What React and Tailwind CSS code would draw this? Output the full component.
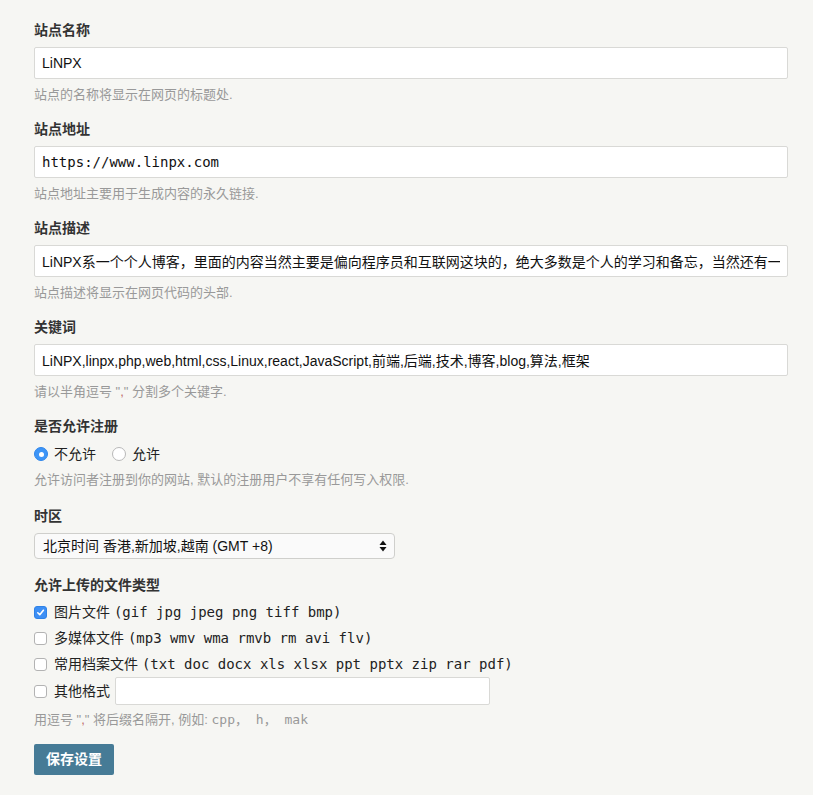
import React, { useState } from 'react';

const SANS = 'font-["Liberation_Sans","Noto_Sans_CJK_SC",sans-serif]';
const MONO = 'font-["DejaVu_Sans_Mono","Noto_Sans_CJK_SC",monospace]';

function Label({ children }) {
  return <div className="text-[14px] leading-5 font-bold text-[#333]">{children}</div>;
}

function Help({ children, className = '' }) {
  return <div className={`text-[13px] leading-5 text-[#999] ${className}`}>{children}</div>;
}

function TextField({ value, mono }) {
  return (
    <input
      type="text"
      defaultValue={value}
      className={`mt-[7px] block w-full h-8 px-[7px] bg-white border border-[#d9d9d6] rounded-[2px] text-[14px] text-[#111] outline-none ${mono ? MONO : SANS}`}
    />
  );
}

function Radio({ checked, label, onClick }) {
  return (
    <label className="flex items-center gap-[6px] cursor-pointer" onClick={onClick}>
      {checked ? (
        <span className="w-[14px] h-[14px] rounded-full bg-[#3d95f7] border border-[#2f86ea] flex items-center justify-center">
          <span className="w-[5px] h-[5px] rounded-full bg-white" />
        </span>
      ) : (
        <span className="w-[14px] h-[14px] rounded-full bg-white border border-[#b8b8b8]" />
      )}
      <span className="text-[14px] text-[#222]">{label}</span>
    </label>
  );
}

function Check({ checked, onClick }) {
  return checked ? (
    <span onClick={onClick} className="w-[13px] h-[13px] shrink-0 rounded-[3px] bg-[#3d8ff5] border border-[#2f82e6] flex items-center justify-center cursor-pointer">
      <svg width="9" height="9" viewBox="0 0 10 10">
        <path d="M2 5.3 L4.2 7.5 L8.2 2.5" fill="none" stroke="#fff" strokeWidth="1.8" strokeLinecap="round" strokeLinejoin="round" />
      </svg>
    </span>
  ) : (
    <span onClick={onClick} className="w-[13px] h-[13px] shrink-0 rounded-[3px] bg-white border border-[#b3b3b3] cursor-pointer" />
  );
}

const FILE_TYPES = [
  { name: '图片文件', ext: '(gif jpg jpeg png tiff bmp)' },
  { name: '多媒体文件', ext: '(mp3 wmv wma rmvb rm avi flv)' },
  { name: '常用档案文件', ext: '(txt doc docx xls xlsx ppt pptx zip rar pdf)' },
];

export default function App() {
  const [allowRegister, setAllowRegister] = useState(false);
  const [types, setTypes] = useState([true, false, false, false]);

  const toggleType = (i) => {
    setTypes((prev) => prev.map((v, idx) => (idx === i ? !v : v)));
  };

  return (
    <div className={`min-h-[795px] bg-[#f6f6f3] ${SANS}`}>
      <div className="pl-[34px] pr-[25px] pt-5 w-[813px]">
        {/* 站点名称 */}
        <div className="mb-[14px]">
          <Label>站点名称</Label>
          <TextField value="LiNPX" />
          <Help className="mt-1.5">站点的名称将显示在网页的标题处.</Help>
        </div>

        <div className="mb-[14px]">
          <Label>站点地址</Label>
          <TextField value="https://www.linpx.com" mono />
          <Help className="mt-1.5">站点地址主要用于生成内容的永久链接.</Help>
        </div>

        <div className="mb-[14px]">
          <Label>站点描述</Label>
          <TextField value="LiNPX系一个个人博客，里面的内容当然主要是偏向程序员和互联网这块的，绝大多数是个人的学习和备忘，当然还有一些生活上的记录。" />
          <Help className="mt-1.5">站点描述将显示在网页代码的头部.</Help>
        </div>

        <div className="mb-[14px]">
          <Label>关键词</Label>
          <TextField value="LiNPX,linpx,php,web,html,css,Linux,react,JavaScript,前端,后端,技术,博客,blog,算法,框架" />
          <Help className="mt-1.5">
            请以半角逗号 "<span className="text-[#c06a6a]">,</span>" 分割多个关键字.
          </Help>
        </div>

        {/* 注册 */}
        <div className="mb-4">
          <Label>是否允许注册</Label>
          <div className="mt-2 h-5 flex items-center gap-4">
            <Radio checked={!allowRegister} label="不允许" onClick={() => setAllowRegister(false)} />
            <Radio checked={allowRegister} label="允许" onClick={() => setAllowRegister(true)} />
          </div>
          <Help className="mt-1.5">允许访问者注册到你的网站, 默认的注册用户不享有任何写入权限.</Help>
        </div>

        {/* 时区 */}
        <div className="mb-4">
          <Label>时区</Label>
          <div className="mt-[7px] relative w-[361px] h-[26px]">
            <select
              defaultValue="8"
              className={`appearance-none w-full h-full pl-2 pr-6 bg-[#fafafa] border border-[#cfcfcc] rounded-[4px] text-[14px] text-[#111] outline-none ${SANS}`}
            >
              <option value="8">北京时间 香港,新加坡,越南 (GMT +8)</option>
            </select>
            <svg className="absolute right-[8px] top-[7px] pointer-events-none" width="8" height="12" viewBox="0 0 8 12">
              <path d="M4 0.5 L7.5 5 L0.5 5 Z" fill="#111" />
              <path d="M4 11.5 L7.5 7 L0.5 7 Z" fill="#111" />
            </svg>
          </div>
        </div>

        {/* 文件类型 */}
        <div>
          <Label>允许上传的文件类型</Label>
          <div className="mt-1 flex flex-col">
            {FILE_TYPES.map((t, i) => (
              <div key={t.name} className="h-[26px] flex items-center gap-[7px]">
                <Check checked={types[i]} onClick={() => toggleType(i)} />
                <span className="text-[14px] text-[#222] whitespace-nowrap">
                  {t.name} <span className={`${MONO} text-[14px]`}>{t.ext}</span>
                </span>
              </div>
            ))}
            <div className="h-[28px] flex items-center gap-[7px]">
              <Check checked={types[3]} onClick={() => toggleType(3)} />
              <span className="text-[14px] text-[#222] whitespace-nowrap">其他格式</span>
              <input
                type="text"
                className="ml-[-2px] w-[375px] h-[28px] bg-white border border-[#d9d9d6] rounded-[2px] outline-none"
              />
            </div>
          </div>
          <Help className="mt-[5px]">
            用逗号 "<span className="text-[#c06a6a]">,</span>" 将后缀名隔开, 例如: <span className={MONO}>cpp， h， mak</span>
          </Help>
        </div>

        <button className="mt-[14px] w-[80px] h-[31px] bg-[#467b96] rounded-[2px] text-white text-[14px] font-bold">
          保存设置
        </button>
      </div>
    </div>
  );
}
